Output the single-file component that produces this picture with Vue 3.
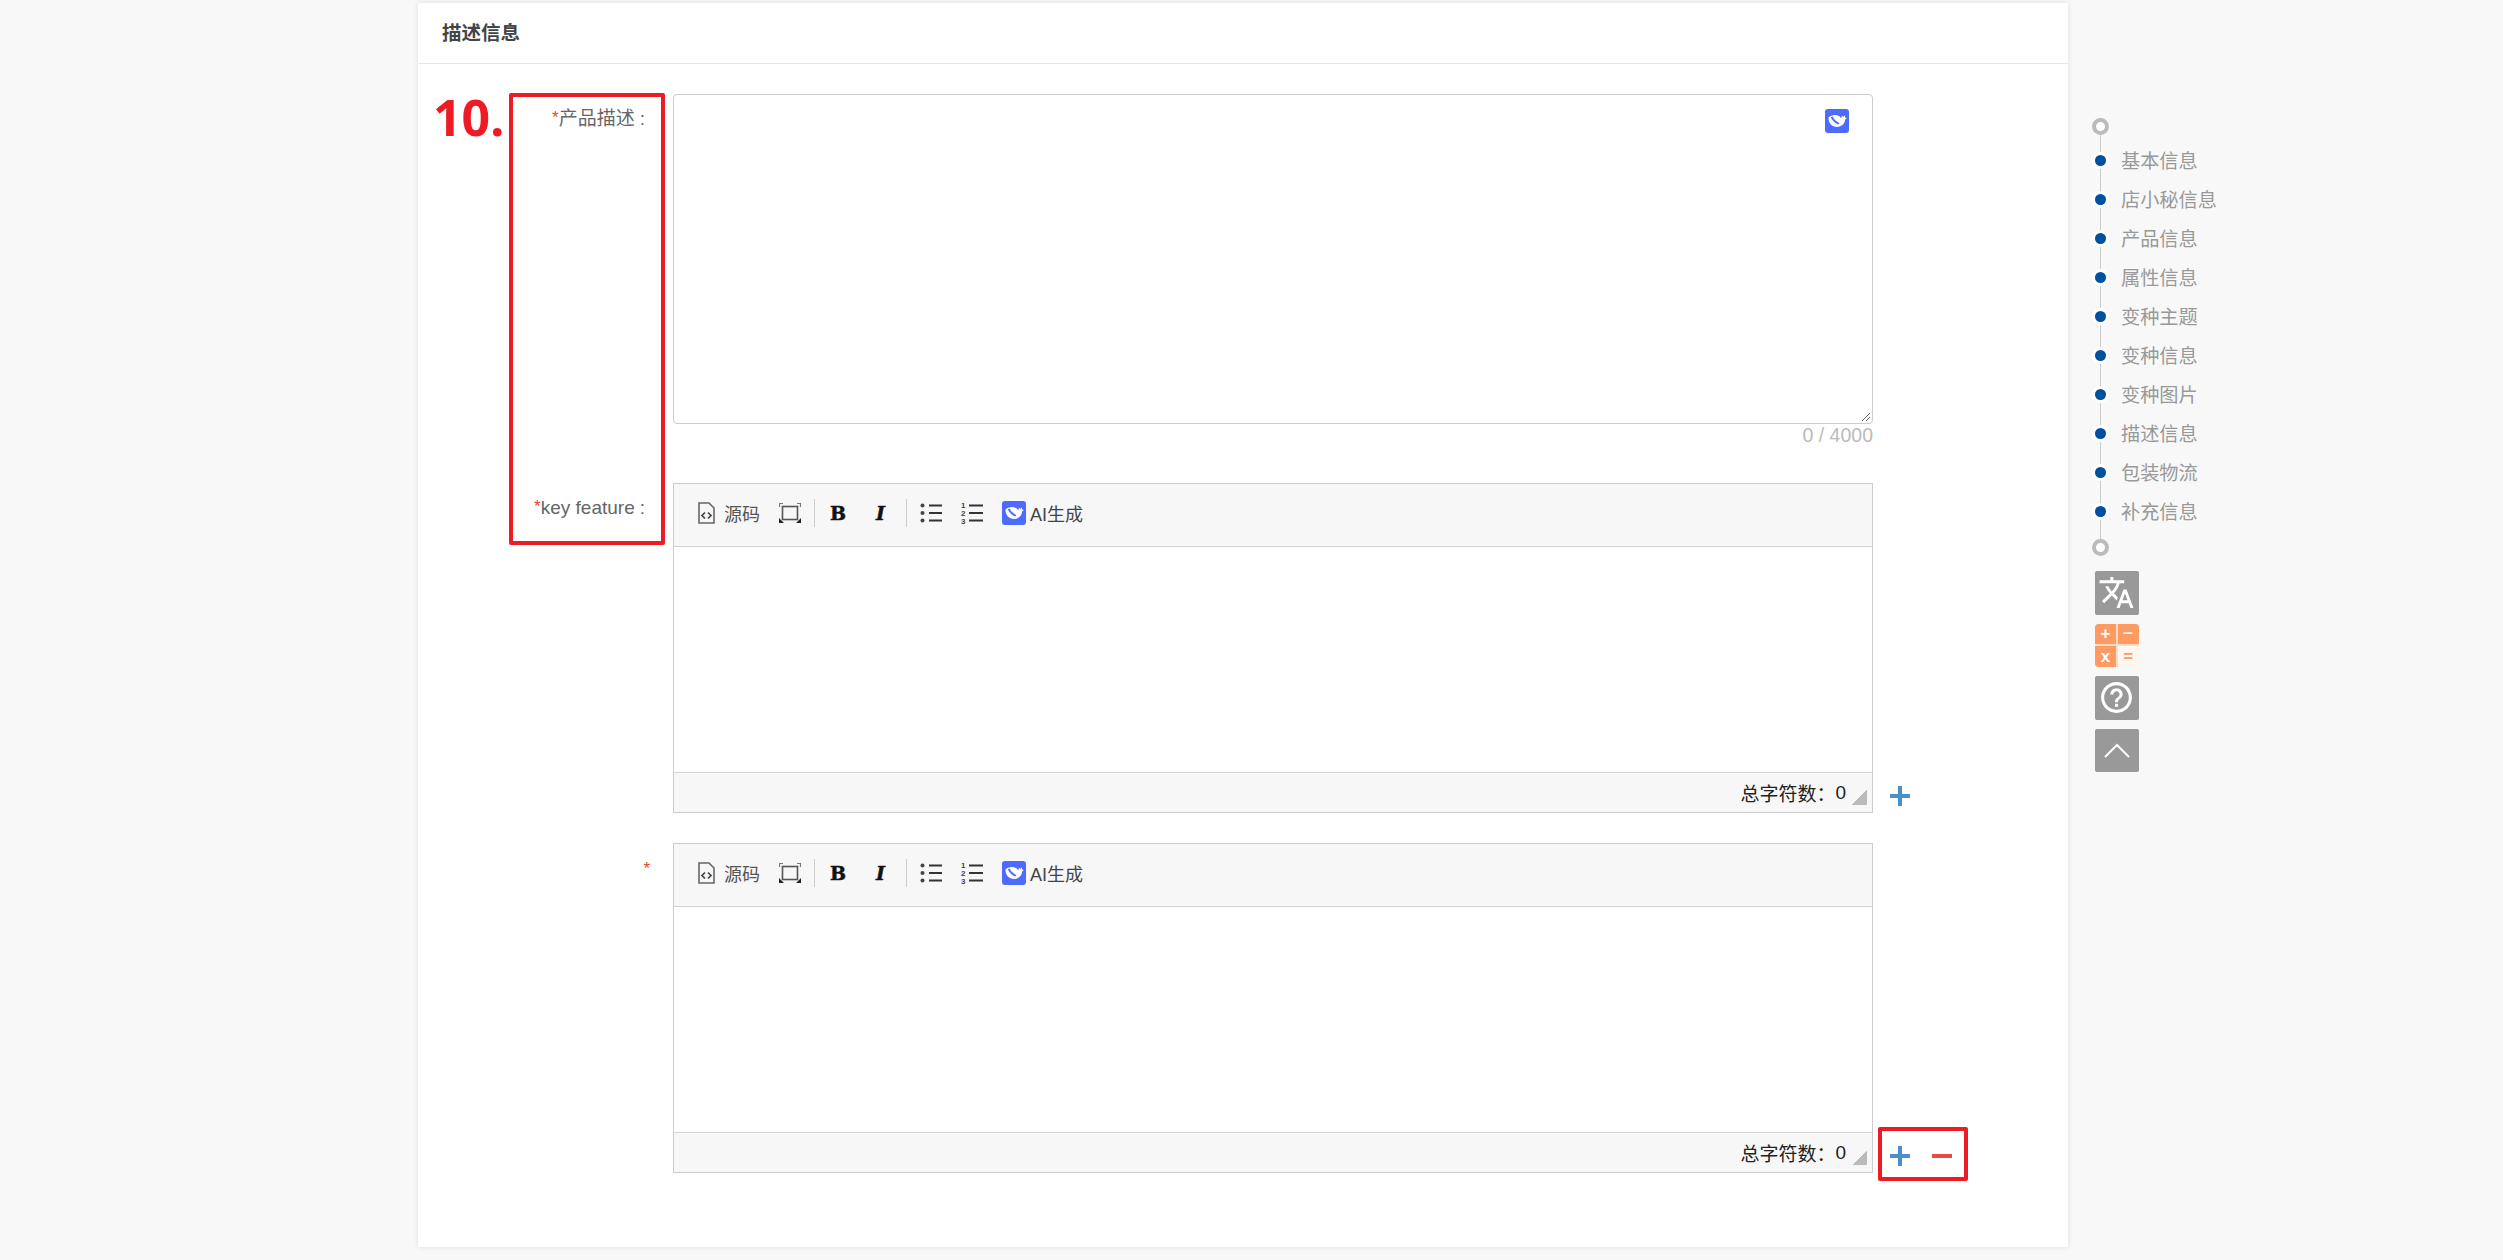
<script setup>
const navItems = ['基本信息', '店小秘信息', '产品信息', '属性信息', '变种主题', '变种信息', '变种图片', '描述信息', '包装物流', '补充信息']
const whale = 'M3.5 8.5C3.2 14 7 18 12 18c4.6 0 8-3.4 8.2-7.4l1.6-1.7-1.7-.3-.3-2.4-1.6 1.8-1.4-1.4c0 1-.1 1.9-.6 2.7C14.6 6.6 11.5 5.7 8.5 6.2 6.8 6.4 5.3 7 4.3 7.9z'
const slit = 'M5.8 8.2 7.8 7.6c.6 2.4 3 4.6 6.6 6.6l-1.2 1.2C9.8 14 7 11.4 5.8 8.2z'
const editors = [
  { label: 'key feature', colon: true, remove: false },
  { label: '', colon: false, remove: true }
]
</script>

<template>
  <div class="page">
    <main class="card">
      <header class="card-head">描述信息</header>
      <div class="card-body">
        <div class="annot-num">10.</div>
        <div class="annot-box annot-labels"></div>

        <section class="row row-desc">
          <label class="label"><i>*</i>产品描述<span class="colon">:</span></label>
          <div class="field">
            <div class="textarea">
              <svg class="logo logo-float" viewBox="0 0 24 24"><rect width="24" height="24" rx="3" fill="#4d6bfe"/><path :d="whale" fill="#fff"/><path :d="slit" fill="#4d6bfe"/></svg>
              <svg class="grip" viewBox="0 0 10 10"><path d="M1 9 9 1M5 9 9 5" stroke="#666" fill="none"/></svg>
            </div>
            <div class="counter">0 / 4000</div>
          </div>
        </section>

        <section v-for="(ed, i) in editors" :key="i" class="row row-editor">
          <label class="label label-ed" :class="{ 'label-bare': !ed.label }"><i>*</i>{{ ed.label }}<span v-if="ed.colon" class="colon">:</span></label>
          <div class="editor">
            <div class="toolbar">
              <span class="tool tool-src">
                <svg width="17" height="22" viewBox="0 0 17 22"><path d="M1 1h10l5 5v15H1z" fill="none" stroke="#666" stroke-width="1.6"/><path d="M7 10.5l-3 3 3 3M10 10.5l3 3-3 3" fill="none" stroke="#444" stroke-width="1.7"/></svg>
                <span>源码</span>
              </span>
              <svg class="tool-full" width="22" height="20" viewBox="0 0 22 20"><rect x="3.5" y="3.5" width="15" height="13" fill="none" stroke="#555" stroke-width="1.6"/><path d="M.5 4V.5H4M18 .5h3.5V4" fill="none" stroke="#777" stroke-width="1.2"/><path d="M0 15v5h5zM22 15v5h-5z" fill="#222"/></svg>
              <span class="sep sep-a"></span>
              <span class="tool-b">B</span>
              <span class="tool-i">I</span>
              <span class="sep sep-b"></span>
              <svg class="tool-ul" width="22" height="20" viewBox="0 0 22 20"><g fill="#444"><circle cx="2.5" cy="2.5" r="2"/><circle cx="2.5" cy="10" r="2"/><circle cx="2.5" cy="17.5" r="2"/></g><path d="M9 2.5h13M9 10h13M9 17.5h13" stroke="#333" stroke-width="2"/></svg>
              <svg class="tool-ol" width="22" height="24" viewBox="0 0 22 24"><g fill="#444" font-family="Liberation Sans" font-size="8" font-weight="700"><text x="0" y="7">1</text><text x="0" y="15">2</text><text x="0" y="23">3</text></g><path d="M8 4.5h14M8 12h14M8 19.5h14" stroke="#333" stroke-width="2"/></svg>
              <svg class="logo" viewBox="0 0 24 24"><rect width="24" height="24" rx="3" fill="#4d6bfe"/><path :d="whale" fill="#fff"/><path :d="slit" fill="#4d6bfe"/></svg>
              <span class="ai">AI生成</span>
            </div>
            <div class="content"></div>
            <div class="status">
              <span class="count-label">总字符数：</span>
              <span class="count-val">0</span>
              <span class="resize"></span>
            </div>
          </div>
          <div class="actions">
            <svg width="20" height="20" viewBox="0 0 20 20"><path d="M10 0v20M0 10h20" stroke="#4a8ecf" stroke-width="4"/></svg>
            <svg v-if="ed.remove" class="minus" width="20" height="20" viewBox="0 0 20 20"><path d="M0 10h20" stroke="#ea4a42" stroke-width="4"/></svg>
            <div v-if="ed.remove" class="annot-box annot-actions"></div>
          </div>
        </section>
      </div>
    </main>

    <aside class="side">
      <div class="timeline">
        <div class="ring-wrap ring-top"><span class="ring"></span></div>
        <div v-for="n in navItems" :key="n" class="nav-item">
          <span class="dot"></span>
          <span class="nav-text">{{ n }}</span>
        </div>
        <div class="ring-wrap ring-end"><span class="ring"></span></div>
      </div>
      <div class="buttons">
        <div class="btn">
          <svg width="37" height="37" viewBox="0 0 24 24"><path fill="#fff" d="M12.87 15.07l-2.54-2.51.03-.03c1.74-1.94 2.98-4.17 3.71-6.53H17V4h-7V2H8v2H1v1.99h11.17C11.5 7.92 10.44 9.75 9 11.35 8.07 10.32 7.3 9.19 6.69 8h-2c.73 1.63 1.73 3.17 2.98 4.56l-5.09 5.02L4 19l5-5 3.11 3.11.76-2.04zM18.5 10h-2L12 22h2l1.12-3h4.75L21 22h2l-4.5-12zm-2.62 7l1.62-4.33L19.12 17h-3.24z"/></svg>
        </div>
        <div class="btn calc">
          <span>+</span><span>−</span><span>x</span><span class="eq">=</span>
        </div>
        <div class="btn">
          <svg width="37" height="37" viewBox="0 0 24 24"><path fill="#fff" d="M11 18h2v-2h-2v2zm1-16C6.48 2 2 6.48 2 12s4.48 10 10 10 10-4.48 10-10S17.52 2 12 2zm0 18c-4.41 0-8-3.59-8-8s3.59-8 8-8 8 3.59 8 8-3.59 8-8 8zm0-14c-2.21 0-4 1.79-4 4h2c0-1.1.9-2 2-2s2 .9 2 2c0 2-3 1.75-3 5h2c0-2.25 3-2.5 3-5 0-2.21-1.79-4-4-4z"/></svg>
        </div>
        <div class="btn">
          <svg width="26" height="15" viewBox="0 0 26 15"><path d="M1 14 13 2l12 12" fill="none" stroke="#fff" stroke-width="2"/></svg>
        </div>
      </div>
    </aside>
  </div>
</template>

<style>
html, body { margin: 0; background: #f8f8f8; }
</style>

<style scoped>
.page {
  display: flex;
  align-items: flex-start;
  box-sizing: border-box;
  height: 1260px;
  padding: 3px 0 0 418px;
  background: #f8f8f8;
  overflow: hidden;
  font-family: "Liberation Sans", "Noto Sans CJK SC", sans-serif;
  color: #555;
}
.card {
  width: 1650px;
  height: 1244px;
  flex: none;
  background: #fff;
  box-shadow: 0 0 6px rgba(0, 0, 0, .1);
}
.card-head {
  box-sizing: border-box;
  height: 61px;
  padding-left: 24px;
  line-height: 60px;
  font-size: 19.5px;
  font-weight: 700;
  color: #444;
  border-bottom: 1px solid #e6e6e6;
}
.card-body {
  position: relative;
  padding-top: 30px;
}
.row {
  display: flex;
  align-items: flex-start;
}
.label {
  box-sizing: border-box;
  width: 255px;
  padding-right: 28px;
  flex: none;
  text-align: right;
  font-size: 19px;
  line-height: 24px;
  color: #666;
}
.label i {
  font-style: normal;
  color: #f04134;
  font-size: 17px;
  vertical-align: 2px;
}
.colon { margin-left: 5px; }
.row-desc .label { padding-top: 12px; }
.label-ed { padding-top: 12px; }
.label-bare { padding: 14px 23px 0 0; }
.field { width: 1200px; }
.textarea {
  position: relative;
  box-sizing: border-box;
  height: 330px;
  border: 1.5px solid #ccc;
  border-radius: 4px;
}
.logo {
  width: 24px;
  height: 24px;
  flex: none;
}
.logo-float {
  position: absolute;
  top: 14px;
  right: 23px;
}
.grip {
  position: absolute;
  right: 1px;
  bottom: 1px;
  width: 10px;
  height: 10px;
}
.counter {
  height: 59px;
  text-align: right;
  font-size: 19.5px;
  line-height: 22px;
  color: #bbb;
}
.row-editor { margin-bottom: 30px; }
.editor {
  box-sizing: border-box;
  width: 1200px;
  height: 330px;
  flex: none;
  display: flex;
  flex-direction: column;
  border: 1.5px solid #ccc;
}
.toolbar {
  display: flex;
  align-items: center;
  box-sizing: border-box;
  height: 63px;
  padding: 0 0 4px 24px;
  flex: none;
  background: #f7f7f7;
  border-bottom: 1.5px solid #d4d4d4;
}
.tool-src {
  display: flex;
  align-items: center;
  gap: 9px;
  font-size: 18px;
  color: #555;
}
.tool-full { margin-left: 19px; }
.sep {
  width: 1px;
  height: 28px;
  background: #ccc;
}
.sep-a { margin-left: 13px; }
.tool-b {
  margin-left: 15px;
  font: 900 19px "DejaVu Serif", serif;
  -webkit-text-stroke: .5px #111;
  color: #111;
}
.tool-i {
  margin-left: 30px;
  width: 15px;
  font: italic 900 19px "DejaVu Serif", serif;
  -webkit-text-stroke: .5px #111;
  color: #111;
}
.sep-b { margin-left: 15px; }
.tool-ul { margin-left: 13px; }
.tool-ol { margin-left: 19px; }
.toolbar .logo { margin-left: 19px; }
.ai {
  margin-left: 4px;
  font-size: 18px;
  color: #444;
}
.content { flex: 1; }
.status {
  display: flex;
  align-items: center;
  justify-content: flex-end;
  box-sizing: border-box;
  height: 40px;
  flex: none;
  padding-right: 5px;
  background: #f7f7f7;
  border-top: 1.5px solid #d4d4d4;
  color: #222;
  font-size: 19px;
}
.resize {
  width: 15px;
  height: 15px;
  margin: 10px 0 0 6px;
  background: linear-gradient(135deg, transparent 50%, #bbb 50%);
}
.actions {
  position: relative;
  display: flex;
  align-items: center;
  height: 20px;
  align-self: flex-end;
  margin: 0 0 7px 17px;
}
.minus { margin-left: 22px; }
.annot-num {
  position: absolute;
  left: 15px;
  top: 21px;
  font: 700 50px/64px "Noto Sans", sans-serif;
  color: #ed1c24;
}
.annot-box {
  position: absolute;
  box-sizing: border-box;
  border: 4px solid #ed1c24;
  border-radius: 2px;
}
.annot-labels {
  left: 91px;
  top: 29px;
  width: 156px;
  height: 452px;
}
.annot-actions {
  left: -12px;
  top: -19px;
  width: 90px;
  height: 54px;
}
.side {
  margin-left: 24px;
  padding-top: 115px;
  width: 200px;
  flex: none;
}
.timeline { position: relative; }
.timeline::before {
  content: "";
  position: absolute;
  left: 8px;
  top: 10px;
  bottom: 10px;
  width: 1px;
  background: #ccc;
}
.ring-wrap { position: relative; height: 17px; }
.ring-top { margin-bottom: 5px; }
.ring-end { margin-top: 9px; }
.ring {
  display: block;
  box-sizing: border-box;
  width: 17px;
  height: 17px;
  border: 4px solid #bbb;
  border-radius: 50%;
  background: #fff;
}
.nav-item {
  position: relative;
  display: flex;
  align-items: center;
  height: 39px;
}
.dot {
  box-sizing: border-box;
  width: 11px;
  height: 11px;
  margin: 1px 0 0 3px;
  border-radius: 50%;
  background: #0050a0;
  box-shadow: 0 0 0 3px #fff;
}
.nav-text {
  margin-left: 15px;
  font-size: 19.2px;
  color: #999;
}
.buttons {
  display: flex;
  flex-direction: column;
  gap: 9px;
  margin: 15px 0 0 3px;
}
.btn {
  display: flex;
  align-items: center;
  justify-content: center;
  width: 43.5px;
  height: 43.5px;
  border-radius: 2px;
  background: #999;
}
.calc {
  display: grid;
  grid-template-columns: 1fr 1fr;
  grid-template-rows: 1fr 1fr;
  align-items: stretch;
  justify-content: stretch;
  gap: 2px;
  border-radius: 4px;
  background: #fbdcc8;
  overflow: hidden;
}
.calc span {
  display: flex;
  align-items: center;
  justify-content: center;
  background: #ff9a62;
  color: #fff;
  font-size: 17px;
  font-weight: 700;
}
.calc .eq {
  background: #fff6f0;
  color: #ff9a62;
}
</style>
